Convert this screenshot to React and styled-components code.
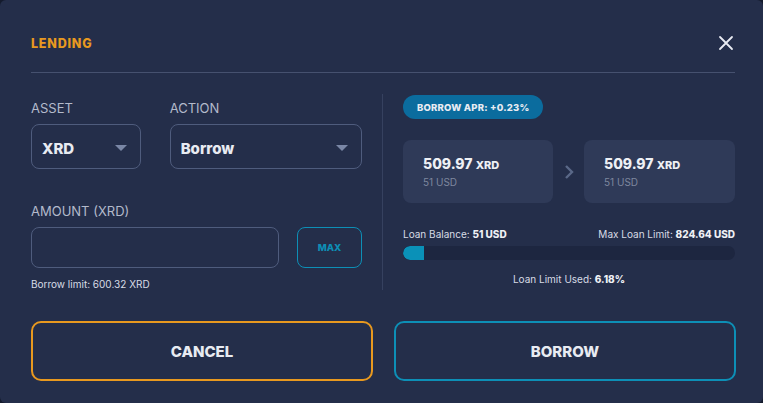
import React from "react";
import styled, { createGlobalStyle } from "styled-components";

const Global = createGlobalStyle`
  html, body { margin: 0; padding: 0; background: #141b2d; }
  body { font-family: Inter, "Noto Sans", sans-serif; }
  * { box-sizing: border-box; }
`;

const Modal = styled.div`
  width: 763px;
  height: 403px;
  background: #242e4a;
  border-radius: 6px;
  padding: 33px 28px 0 31px;
  display: flex;
  flex-direction: column;
  color: #e8ebf2;
`;

const Header = styled.div`
  display: flex;
  align-items: center;
  justify-content: space-between;
  height: 20px;
`;

const Title = styled.div`
  color: #e8991f;
  font-weight: 800;
  font-size: 12.5px;
  letter-spacing: 0.8px;
`;

const Close = styled.button`
  background: none;
  border: none;
  padding: 0;
  width: 16px;
  height: 16px;
  display: flex;
  margin-right: 1px;
`;

const Divider = styled.div`
  height: 1px;
  background: #46516f;
  margin-top: 19px;
`;

const Body = styled.div`
  display: grid;
  grid-template-columns: 331px 1px 332px;
  column-gap: 20px;
  margin-top: 21px;
`;

const Left = styled.div`
  display: flex;
  flex-direction: column;
  padding-top: 6px;
`;

const Row = styled.div`
  display: flex;
  gap: ${(p) => p.$gap || 0}px;
  align-items: flex-end;
`;

const Field = styled.div`
  display: flex;
  flex-direction: column;
  width: ${(p) => p.$w}px;
  margin-top: ${(p) => p.$mt || 0}px;
`;

const Label = styled.div`
  font-size: 13px;
  color: #b3bacb;
  margin-bottom: 8px;
  line-height: 16px;
`;

const Select = styled.div`
  height: 45px;
  border: 1px solid #4f5c7d;
  border-radius: 8px;
  display: flex;
  align-items: center;
  justify-content: space-between;
  padding: 3px 13px 0 10px;
  font-weight: 800;
  font-size: 15px;
  color: #e8ebf2;
`;

const Caret = styled.span`
  width: 0;
  height: 0;
  border-left: 6px solid transparent;
  border-right: 6px solid transparent;
  border-top: 6px solid #7a87a6;
`;

const Input = styled.div`
  flex: 1;
  height: 41px;
  border: 1px solid #4f5c7d;
  border-radius: 8px;
`;

const MaxButton = styled.div`
  width: 65px;
  height: 41px;
  border: 1px solid #0d8fb6;
  border-radius: 8px;
  color: #0d8fb6;
  font-size: 9.5px;
  font-weight: 800;
  display: flex;
  align-items: center;
  justify-content: center;
`;

const Hint = styled.div`
  font-size: 10px;
  color: #d8dce6;
  margin-top: 10px;
`;

const VLine = styled.div`
  background: #36415f;
  width: 1px;
  height: 196px;
`;

const Right = styled.div`
  display: flex;
  flex-direction: column;
  padding-top: 1px;
`;

const Badge = styled.div`
  align-self: flex-start;
  height: 24px;
  padding: 0 14px;
  border-radius: 12px;
  background: #0b6c9e;
  color: #e8ebf2;
  font-size: 9.5px;
  font-weight: 800;
  letter-spacing: 0.2px;
  display: flex;
  align-items: center;
`;

const Cards = styled.div`
  display: flex;
  align-items: center;
  justify-content: space-between;
  margin-top: 21px;
`;

const Card = styled.div`
  width: ${(p) => p.$w}px;
  height: 63px;
  background: #2f3a58;
  border-radius: 8px;
  padding: 15px 0 0 20px;
  display: flex;
  flex-direction: column;
`;

const Amount = styled.div`
  font-size: 14px;
  font-weight: 800;
  color: #eef0f5;
  line-height: 18px;
  span { font-size: 11px; }
`;

const Sub = styled.div`
  font-size: 10px;
  color: #7e879e;
  margin-top: 2px;
`;

const StatsRow = styled.div`
  display: flex;
  justify-content: space-between;
  font-size: 10px;
  color: #d8dce6;
  margin-top: 25px;
  b { font-weight: 800; color: #eef0f5; }
`;

const Track = styled.div`
  height: 14px;
  background: #1d2640;
  border-radius: 7px;
  margin-top: 6px;
  overflow: hidden;
`;

const Fill = styled.div`
  height: 100%;
  background: #0a91b8;
  border-radius: 7px 0 0 7px;
`;

const Centered = styled.div`
  text-align: center;
  font-size: 10px;
  color: #d8dce6;
  margin-top: 13px;
  b { font-weight: 800; color: #eef0f5; }
`;

const Buttons = styled.div`
  display: grid;
  grid-template-columns: 342px 342px;
  column-gap: 21px;
  margin-top: 31px;
`;

const ActionButton = styled.button`
  height: 60px;
  border: 2px solid ${(p) => p.$color};
  border-radius: 10px;
  background: transparent;
  color: #e8ebf2;
  font-family: inherit;
  font-size: 15px;
  font-weight: 800;
`;

export default function App() {
  const used = 6.18;
  return (
    <>
      <Global />
      <Modal>
        <Header>
          <Title>LENDING</Title>
          <Close aria-label="close">
            <svg width="16" height="16" viewBox="0 0 16 16">
              <path d="M2 2L14 14M14 2L2 14" stroke="#e8ebf2" strokeWidth="1.8" strokeLinecap="round" />
            </svg>
          </Close>
        </Header>
        <Divider />
        <Body>
          <Left>
            <Row $gap={29}>
              <Field $w={110}>
                <Label>ASSET</Label>
                <Select>
                  XRD
                  <Caret />
                </Select>
              </Field>
              <Field $w={193}>
                <Label>ACTION</Label>
                <Select>
                  Borrow
                  <Caret />
                </Select>
              </Field>
            </Row>
            <Field $w={331} $mt={34}>
              <Label>AMOUNT (XRD)</Label>
              <Row $gap={18}>
                <Input />
                <MaxButton>MAX</MaxButton>
              </Row>
            </Field>
            <Hint>Borrow limit: 600.32 XRD</Hint>
          </Left>
          <VLine />
          <Right>
            <Badge>BORROW APR: +0.23%</Badge>
            <Cards>
              <Card $w={150}>
                <Amount>
                  509.97 <span>XRD</span>
                </Amount>
                <Sub>51 USD</Sub>
              </Card>
              <svg width="12" height="16" viewBox="0 0 12 16">
                <path d="M3 2L9 8L3 14" stroke="#5a6888" strokeWidth="2.4" fill="none" />
              </svg>
              <Card $w={151}>
                <Amount>
                  509.97 <span>XRD</span>
                </Amount>
                <Sub>51 USD</Sub>
              </Card>
            </Cards>
            <StatsRow>
              <span>
                Loan Balance: <b>51 USD</b>
              </span>
              <span>
                Max Loan Limit: <b>824.64 USD</b>
              </span>
            </StatsRow>
            <Track>
              <Fill style={{ width: `${used}%` }} />
            </Track>
            <Centered>
              Loan Limit Used: <b>{used}%</b>
            </Centered>
          </Right>
        </Body>
        <Buttons>
          <ActionButton $color="#e8991f">CANCEL</ActionButton>
          <ActionButton $color="#0d8fb6">BORROW</ActionButton>
        </Buttons>
      </Modal>
    </>
  );
}
